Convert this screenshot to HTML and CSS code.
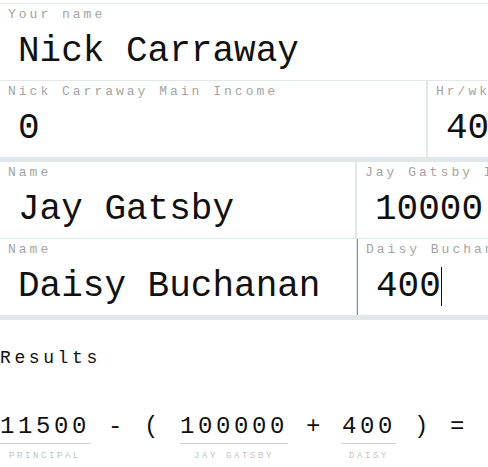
FILE: index.html
```html
<!DOCTYPE html>
<html lang="en">
<head>
<meta charset="utf-8">
<title>Budget</title>
<link rel="stylesheet" href="styles.css">
</head>
<body>
<div class="form">
  <section class="group group-first">
    <div class="row">
      <div class="cell cell-full">
        <div class="label">Your name</div>
        <div class="value">Nick Carraway</div>
      </div>
    </div>
    <div class="row">
      <div class="cell cell-income">
        <div class="label">Nick Carraway Main Income</div>
        <div class="value">0</div>
      </div>
      <div class="cell cell-hours">
        <div class="label">Hr/wk</div>
        <div class="value">40</div>
      </div>
    </div>
  </section>
  <section class="group">
    <div class="row">
      <div class="cell cell-name">
        <div class="label">Name</div>
        <div class="value">Jay Gatsby</div>
      </div>
      <div class="cell cell-amount">
        <div class="label">Jay Gatsby Income</div>
        <div class="value value-amount">100000</div>
      </div>
    </div>
    <div class="row row-focus">
      <div class="cell cell-name">
        <div class="label">Name</div>
        <div class="value">Daisy Buchanan</div>
      </div>
      <div class="cell cell-amount cell-focused">
        <div class="label">Daisy Buchanan Income</div>
        <div class="value value-amount">400<span class="caret"></span></div>
      </div>
    </div>
  </section>
</div>
<section class="results">
  <h2 class="results-title">Results</h2>
  <div class="equation"><span class="term"><span class="term-value">11500</span><span class="term-label">PRINCIPAL</span></span> - ( <span class="term"><span class="term-value">100000</span><span class="term-label">JAY GATSBY</span></span> + <span class="term"><span class="term-value">400</span><span class="term-label">DAISY</span></span> ) = <span class="result">-88900</span></div>
</section>
</body>
</html>
```
FILE: styles.css
```css
html, body {
  margin: 0;
  padding: 0;
  overflow-x: hidden;
  background: #ffffff;
}

body {
  font-family: "Liberation Mono", "Courier New", monospace;
  font-size: 18px;
  letter-spacing: 0.2em;
  color: #111111;
}

.form {
  width: 760px;
  margin-top: 3px;
}

.group {
  border-bottom: 5px solid #e2e7e7;
}

.group-first {
  border-top: 1px solid #e2e7e7;
}

.row {
  display: flex;
}

.row + .row {
  border-top: 1px solid #e2e7e7;
}

.cell {
  box-sizing: border-box;
  height: 76px;
  padding-top: 3px;
  overflow: hidden;
}

.cell-full {
  flex: 1;
}

.cell-income {
  width: 428px;
  border-right: 2px solid #e2e7e7;
}

.cell-hours {
  flex: 1;
}

.cell-name {
  width: 357px;
  border-right: 2px solid #e2e7e7;
}

.cell-amount {
  flex: 1;
}

.row-focus .cell-name {
  border-right-width: 1px;
}

.cell-focused {
  border-left: 1px solid #1cb8b8;
}

.label {
  font-size: 13px;
  line-height: 15px;
  letter-spacing: 3px;
  color: #a4a4a4;
  padding-left: 8px;
  white-space: nowrap;
}

.value {
  font-size: 36px;
  line-height: 40px;
  letter-spacing: 0;
  padding-left: 18px;
  margin-top: 10px;
  white-space: nowrap;
}

.value-amount {
  width: 108px;
  overflow: hidden;
}

.caret {
  display: inline-block;
  width: 1px;
  height: 39px;
  background: #111111;
  vertical-align: top;
}

.results-title {
  font-size: 18px;
  line-height: 21px;
  font-weight: normal;
  margin: 28px 0 0;
}

.equation {
  font-size: 24px;
  line-height: 28px;
  margin-top: 44px;
  white-space: nowrap;
}

.term {
  display: inline-flex;
  flex-direction: column;
}

.term-value {
  border-bottom: 1px solid #d0d0d0;
  padding-bottom: 2px;
}

.term-label {
  font-size: 9px;
  line-height: 10px;
  letter-spacing: 2.6px;
  color: #c4c4c4;
  text-align: center;
  margin-top: 7px;
}
```
